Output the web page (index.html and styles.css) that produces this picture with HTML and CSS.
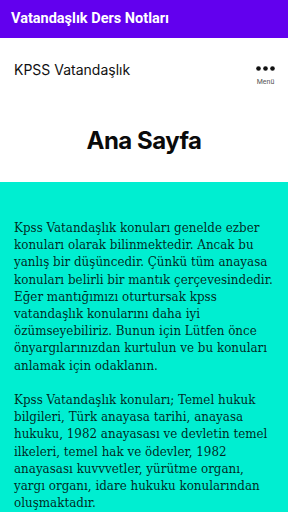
FILE: index.html
```html
<!DOCTYPE html>
<html lang="tr">
<head>
<meta charset="utf-8">
<link rel="stylesheet" href="styles.css">
</head>
<body>
<div class="appbar">Vatandaşlık Ders Notları</div>
<header class="site-header">
  <div class="brand">KPSS Vatandaşlık</div>
  <div class="menu">
    <svg class="dots" width="19" height="5" viewBox="0 0 19 5"><circle cx="2.5" cy="2.5" r="2.3"/><circle cx="9.5" cy="2.5" r="2.3"/><circle cx="16.5" cy="2.5" r="2.3"/></svg>
    <span class="menu-label">Menü</span>
  </div>
</header>
<section class="hero"><h1>Ana Sayfa</h1></section>
<main class="content">
  <p>Kpss Vatandaşlık konuları genelde ezber konuları olarak bilinmektedir. Ancak bu yanlış bir düşüncedir. Çünkü tüm anayasa konuları belirli bir mantık çerçevesindedir. Eğer mantığımızı oturtursak kpss vatandaşlık konularını daha iyi özümseyebiliriz. Bunun için Lütfen önce önyargılarınızdan kurtulun ve bu konuları anlamak için odaklanın.</p>
  <p>Kpss Vatandaşlık konuları; Temel hukuk bilgileri, Türk anayasa tarihi, anayasa hukuku, 1982 anayasası ve devletin temel ilkeleri, temel hak ve ödevler, 1982 anayasası kuvvvetler, yürütme organı, yargı organı, idare hukuku konularından oluşmaktadır.</p>
</main>
</body>
</html>
```
FILE: styles.css
```css
html, body { margin: 0; padding: 0; }
body { background: #00eed1; font-family: Roboto, "Noto Sans", sans-serif; }
.appbar {
  height: 38px;
  background: #6200ee;
  color: #fff;
  font-family: Roboto, sans-serif;
  font-weight: 700;
  font-size: 14.5px;
  line-height: 38px;
  padding-left: 11px;
  box-sizing: border-box;
}
.site-header {
  background: #fff;
  display: flex;
  justify-content: space-between;
  align-items: flex-start;
  padding: 22px 13px 0 14px;
  height: 74px;
  box-sizing: border-box;
}
.brand {
  font-family: Inter, Roboto, sans-serif;
  font-size: 14px;
  line-height: 18px;
  color: #111;
  padding-top: 1px;
}
.menu {
  display: flex;
  flex-direction: column;
  align-items: center;
  padding-top: 6px;
}
.dots { fill: #111; display: block; }
.menu-label {
  font-family: Roboto, sans-serif;
  font-size: 7px;
  color: #555;
  margin-top: 7px;
  line-height: 9px;
}
.hero {
  background: #fff;
  height: 70px;
  display: flex;
  justify-content: center;
  align-items: flex-start;
}
.hero h1 {
  margin: 0;
  font-family: Inter, sans-serif;
  font-weight: 700;
  font-size: 24px;
  letter-spacing: -0.5px;
  line-height: 30px;
  padding-top: 14px;
  color: #0a0a0a;
}
.content {
  padding: 37px 13px 0 14px;
}
.content p {
  margin: 0 0 17.2px 0;
  font-family: "DejaVu Serif Condensed", "DejaVu Serif", serif;
  font-stretch: condensed;
  font-size: 13.25px;
  line-height: 17.2px;
  color: rgba(0,0,0,0.85);
}
```
